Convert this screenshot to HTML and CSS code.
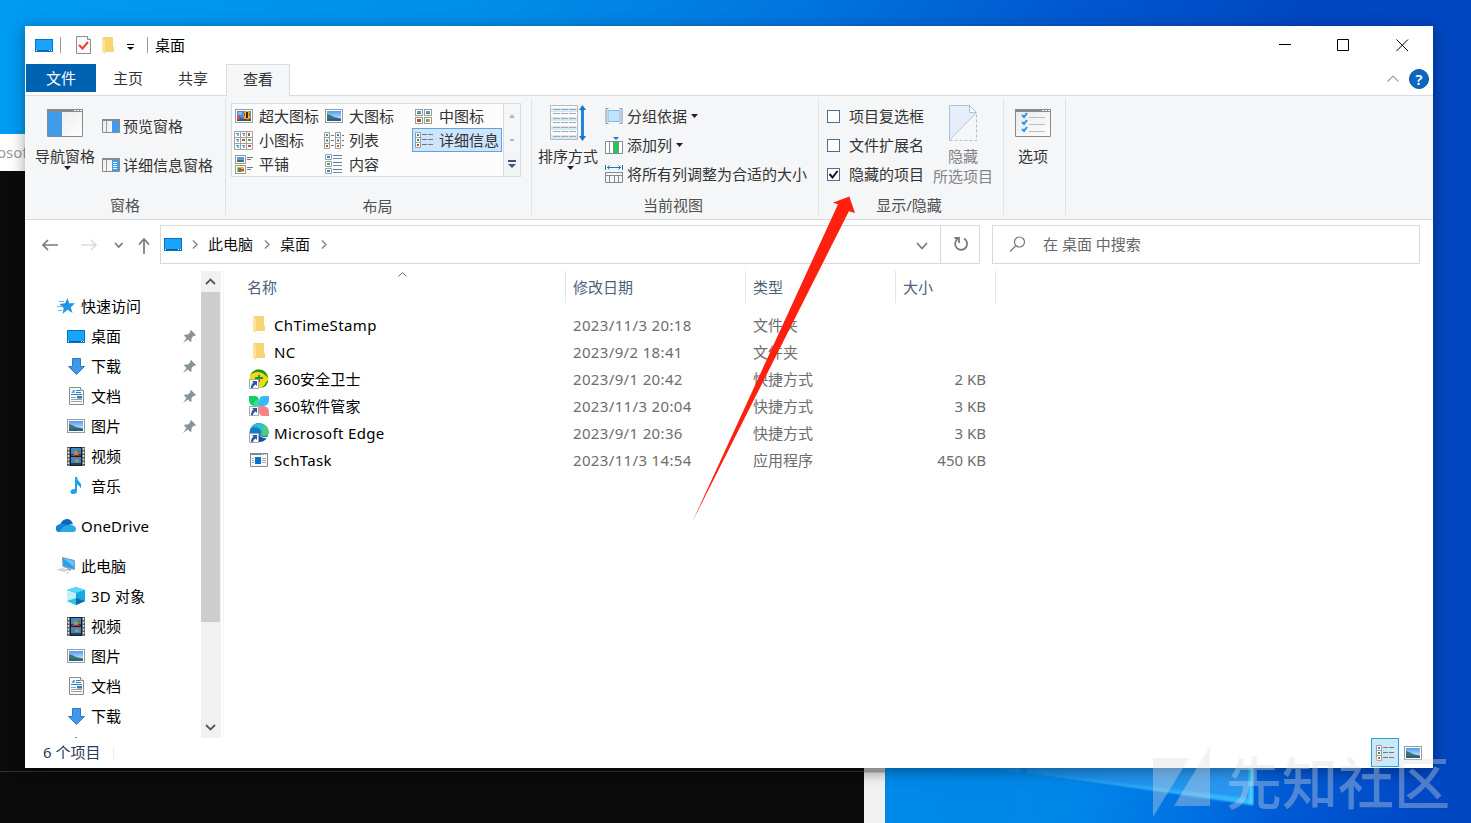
FILE: index.html
```html
<!DOCTYPE html>
<html lang="zh-CN">
<head>
<meta charset="utf-8">
<title>桌面</title>
<link rel="stylesheet" href="styles.css">
</head>
<body>
<svg class="sprite" width="0" height="0" aria-hidden="true">
  <defs>
    <linearGradient id="sky" x1="0" y1="0" x2="0" y2="1"><stop offset="0" stop-color="#4f9bf0"/><stop offset="1" stop-color="#e6f3fc"/></linearGradient>
    <linearGradient id="paneFill" x1="0" y1="0" x2="1" y2="1"><stop offset="0" stop-color="#e9eaeb"/><stop offset="1" stop-color="#fdfdfd"/></linearGradient>
  </defs>
  <symbol id="desktop" viewBox="0 0 18 13"><rect x=".5" y=".5" width="17" height="12" fill="#18a4fb" stroke="#0a70c0"/><path d="M1 11.5h16" stroke="#0a5fae"/><path d="M1 11.5h1M14 11.5h1M16 11.5h1" stroke="#fff"/></symbol>
  <symbol id="folder" viewBox="0 0 13 17"><path d="M1 0h10v10h1v5H1z" fill="#f6d673"/><path d="M0 0l3 3v14l-3-2z" fill="#fde3a0"/></symbol>
  <symbol id="check-doc" viewBox="0 0 15 18"><path d="M.5.5h11l3 3v14H.5z" fill="#fafafa" stroke="#8a8f92"/><path d="M11.5.5v3h3" fill="#fff" stroke="#8a8f92"/><path d="M3 9l3.500 3.500L12 6" fill="none" stroke="#ee3b2b" stroke-width="2"/></symbol>
  <symbol id="caret" viewBox="0 0 7 4"><path d="M0 0h7L3.500 4z"/></symbol>
  <symbol id="pic" viewBox="0 0 18 14"><rect x=".5" y=".5" width="17" height="13" fill="#fff" stroke="#979b9e"/><path d="M2 2h14v10H2z" fill="url(#sky)"/><path d="M2 5q4 1 7 3l7 1.500v1H2z" fill="#3e7867"/><path d="M2 10l6-.5 8 .5v2H2z" fill="#2c5f92"/></symbol>
  <symbol id="pic-xl" viewBox="0 0 18 14"><rect x=".5" y=".5" width="17" height="13" fill="#fff" stroke="#979b9e"/><path d="M2 2h14v10H2z" fill="#3b8be9"/><path d="M2 10h14v2H2z" fill="#385b38"/><path d="M3 3h4v3H3z" fill="#79b9f6"/><path d="M3 6h2v2h3v3H3z" fill="#e14c32"/><path d="M5 9l3 1v2H4z" fill="#2459b6"/><ellipse cx="12" cy="6" rx="3.500" ry="4" fill="#f2b51d"/><path d="M12 3v6" stroke="#44250f" stroke-width="2"/><path d="M9.500 4v3M14.500 4v3" stroke="#d13f25"/><path d="M11 10h3v1h-3z" fill="#c24427"/></symbol>
  <symbol id="thumb" viewBox="0 0 8 7"><rect x=".5" y=".5" width="7" height="6" fill="#fff" stroke="#979b9e"/><path d="M2 2h4v1.500H2z" fill="#4c9af1"/><path d="M2 3.500h4V5H2z" fill="#3d7a4b"/></symbol>
  <symbol id="thumb-r" viewBox="0 0 8 7"><rect x=".5" y=".5" width="7" height="6" fill="#fff" stroke="#979b9e"/><path d="M2 2h2v3H2z" fill="#ce4526"/><path d="M4 2h2v3H4z" fill="#a35d1a"/></symbol>
  <symbol id="thumb-g" viewBox="0 0 8 7"><rect x=".5" y=".5" width="7" height="6" fill="#fff" stroke="#979b9e"/><path d="M2 2h2v3H2z" fill="#57a456"/><path d="M4 2h2v3H4z" fill="#eca332"/></symbol>
  <symbol id="medium" viewBox="0 0 18 15"><use href="#thumb" width="8" height="7"/><use href="#thumb" x="9" width="8" height="7"/><use href="#thumb-r" y="8" width="8" height="7"/><use href="#thumb-g" x="9" y="8" width="8" height="7"/></symbol>
  <symbol id="small" viewBox="0 0 19 19"><path d="M.5.5h18v18H.5z" fill="#fff" stroke="#a0a3a5"/><path d="M6.500 0v19M12.500 0v19M0 6.500h19M0 12.500h19" stroke="#a0a3a5"/><path d="M2 2.500h3M8 2.500h3M2 8.500h3M2 14.500h3M8 14.500h3" stroke="#4396ef"/><path d="M3 4h2M9 4h2M9 16h2M3 10h2M3 16h2" stroke="#2c7554"/><path d="M14 2h2v3h-2zM8 8h3v2H8zM14 14h3v2h-3z" fill="#c94d28"/><path d="M14 8h3v2h-3z" fill="#5ca04d"/></symbol>
  <symbol id="list" viewBox="0 0 20 17"><path d="M.5.5h5v16h-5zM11.500.5h5v16h-5zM0 5.500h6M0 11.500h6M11 5.500h6M11 11.500h6" fill="#fff" stroke="#9b9fa2"/><path d="M2 3h2M13 3h2" stroke="#348bd8" stroke-width="2"/><path d="M2 8.500h2M13 8.500h2" stroke="#3d8a48" stroke-width="2"/><path d="M2 14h2M13 14h2" stroke="#ca4b27" stroke-width="2"/><path d="M7 3.500h3M7 8.500h3M7 13.500h3M18 3.500h2M18 8.500h2M18 13.500h2" stroke="#777"/></symbol>
  <symbol id="details" viewBox="0 0 19 16"><path d="M.5.5h5v15h-5zM0 5.500h6M0 10.500h6" fill="#fff" stroke="#9b9fa2"/><path d="M2 3h2" stroke="#348bd8" stroke-width="2"/><path d="M2 8h2" stroke="#3d8a48" stroke-width="2"/><path d="M2 13h2" stroke="#ca4b27" stroke-width="2"/><path d="M7 2.500h5M13 2.500h5M7 7.500h5M13 7.500h5M7 12.500h5M13 12.500h5" stroke="#777"/></symbol>
  <symbol id="tiles" viewBox="0 0 19 19"><rect x=".5" y=".5" width="10" height="8" fill="#fff" stroke="#979b9e"/><path d="M2 2h7v2.500H2z" fill="#4c9af1"/><path d="M2 4.500h7V7H2z" fill="#3e7867"/><rect x=".5" y="10.500" width="10" height="8" fill="#fff" stroke="#979b9e"/><path d="M2 12h7v5H2z" fill="#f1ae41"/><path d="M3 13h3v4H3z" fill="#48934b"/><path d="M6 14h3v2H6z" fill="#ce4a2b"/><path d="M12 2.500h6M12 4.500h4M12 12.500h6M12 14.500h4" stroke="#777"/></symbol>
  <symbol id="content" viewBox="0 0 18 20"><path d="M.5.5h6v5h-6zM.5 7.500h6v5h-6zM.5 14.500h6v5h-6z" fill="#fff" stroke="#9b9fa2"/><path d="M2 3h3M2 17h3" stroke="#348bd8" stroke-width="2"/><path d="M2 10h3" stroke="#6a9e36" stroke-width="2"/><path d="M8 1.500h9M8 8.500h9M8 15.500h9" stroke="#777"/><path d="M8 4.500h9M8 11.500h9M8 18.500h9" stroke="#5796dc"/></symbol>
  <symbol id="nav-pane" viewBox="0 0 36 28"><path d="M.5.5h35v27H.5z" fill="url(#paneFill)" stroke="#878b8e"/><path d="M0 0h36v3H0z" fill="#878b8e"/><path d="M27 1.500h2M30 1.500h2M33 1.500h2" stroke="#fff"/><path d="M1 3h14v24H1z" fill="#409ce8"/></symbol>
  <symbol id="preview-pane" viewBox="0 0 18 14"><path d="M.5.5h17v13H.5z" fill="url(#paneFill)" stroke="#878b8e"/><path d="M0 0h18v2H0z" fill="#878b8e"/><path d="M4.500 2v11" stroke="#999"/><path d="M10 2h7v11h-7z" fill="#409ce8"/></symbol>
  <symbol id="detail-pane" viewBox="0 0 18 14"><use href="#preview-pane" width="18" height="14"/><path d="M11 4.500h4M11 6.500h4M11 8.500h4M11 10.500h4" stroke="#fff"/></symbol>
  <symbol id="sort" viewBox="0 0 36 36"><path d="M.5.5h27v34H.5z" fill="#fbfcfd" stroke="#b7bbbe"/><path d="M1 3h26v4H1zM1 12h26v4H1zM1 21h26v4H1zM1 30h26v4H1z" fill="#d3eaf6"/><path d="M3 4.500h24M3 8.500h24M3 13.500h24M3 17.500h24M3 22.500h24M3 26.500h24M3 31.500h24" stroke="#a5a9ac" stroke-dasharray="7 1"/><path d="M32.500 2v32" stroke="#2287dc" stroke-width="3"/><path d="M29 5l3.500-5L36 5zM29 31l3.500 5 3.500-5z" fill="#1976c8"/></symbol>
  <symbol id="group" viewBox="0 0 17 16"><path d="M3 .5H.5v15H3M14 .5h2.500v15H14" fill="none" stroke="#8b8f92"/><rect x="2.500" y="2.500" width="12" height="11" fill="#c3e3fb" stroke="#7bb9ed"/></symbol>
  <symbol id="addcol" viewBox="0 0 18 17"><path d="M.5 4.500h17v12H.5zM4.500 4v13M13.500 4v13" fill="#fff" stroke="#858a8d"/><path d="M9 5h4v11H9z" fill="#19cf50"/><path d="M8.500 4v13" stroke="#858a8d"/><path d="M8 0h6l-3 3z" fill="#1976c8"/></symbol>
  <symbol id="fitcol" viewBox="0 0 18 18"><path d="M.5 0v5M17.500 0v5M2 2.500h14M4.500.5l-2 2 2 2M13.500.5l2 2-2 2" fill="none" stroke="#1976b8"/><path d="M0 7.500h18M0 10.500h18M.5 7v10.500h17V7M4.500 11v6M9.500 11v6M13.500 11v6" fill="none" stroke="#85898c"/></symbol>
  <symbol id="hide" viewBox="0 0 28 36"><path d="M0 0h21l6 7L0 35z" fill="#e6eff9"/><path d="M20.500.5v7h7" fill="#fff" stroke="#a9c2d7"/><path d="M.5 35V.5h20l7 7L.5 35" fill="none" stroke="#a9c2d7"/><path d="M.5 35.500h27V8" fill="none" stroke="#a9c2d7" stroke-dasharray="3 2"/></symbol>
  <symbol id="options" viewBox="0 0 36 28"><path d="M.5.5h35v27H.5z" fill="url(#paneFill)" stroke="#878b8e"/><path d="M0 0h36v3H0z" fill="#878b8e"/><path d="M27 1.500h2M30 1.500h2M33 1.500h2" stroke="#fff"/><path d="M7 6l2 2 3-4M7 13l2 2 3-4M7 20l2 2 3-4" fill="none" stroke="#2f92df" stroke-width="2"/><path d="M14 8.500h16M14 15.500h16M14 22.500h16" stroke="#bbbfc1"/></symbol>
  <symbol id="star" viewBox="0 0 18 16"><path d="M10.500 0l1.700 5.300H18l-4.200 3.900L15.500 15l-5-3.200L5.500 16l1.200-6L2.500 6l5.500-.7z" fill="#1f98e4"/><path d="M2 3.500h5M0 8.500h5M1 12.500h4" stroke="#65b8ed"/></symbol>
  <symbol id="down" viewBox="0 0 17 17"><path d="M4.500.5h8v8h4l-8 8-8-8h4z" fill="#4298e8" stroke="#2d7ac2"/></symbol>
  <symbol id="doc" viewBox="0 0 15 18"><path d="M.5.5h11l3 3v14H.5z" fill="#fafafa" stroke="#888d90"/><path d="M11.500.5v3h3" fill="#fff" stroke="#888d90"/><path d="M3 6l2-3v3M7 3.500h4M7 5.500h5M2 7.500h11" stroke="#1e84d8" fill="none"/><path d="M2 10.500h5M2 12.500h11M2 14.500h11" stroke="#9b9fa2"/><path d="M8 9h5v2.500H8z" fill="#3876b2"/></symbol>
  <symbol id="video" viewBox="0 0 18 19"><path d="M0 0h18v19H0z" fill="#565a5d"/><path d="M1.500 1v18M16.500 1v18" stroke="#e8e8e8" stroke-width="1.500" stroke-dasharray="2 1.500"/><path d="M4 1h10v8H4zM4 10h10v8H4z" fill="#3c86d2"/><path d="M4 7h10v2H4zM4 16h10v2H4z" fill="#21406a"/><path d="M7 6l2-3 2 3v2H7zM8 13l3-1 1 3H8z" fill="#c98f2a"/><path d="M5 8h3v1H5zM10 7h2v4h-2z" fill="#e5352b"/><path d="M11 3h2v3h-2zM6 14h2v1H6z" fill="#448c38"/><path d="M3.500 0v19M14.500 0v19M3 9.500h12M3 .5h12M3 18.500h12" stroke="#1b1e20"/></symbol>
  <symbol id="music" viewBox="0 0 12 18"><path d="M5 0h2q0 3 3 5.500 2 2.500.5 6-.5-3-3.500-4V14q0 3-3.500 3Q.5 17 .5 15q0-3 4.500-3z" fill="#1ea0f1"/></symbol>
  <symbol id="cloud" viewBox="0 0 20 14"><path d="M4 6q2-6 7-6 4 0 6 5-4 0-8 4l-6 4Q0 13 0 9q0-3 4-3z" fill="#0868bc"/><path d="M4 5q5-1 8 3l-8 5q-4 0-4-4 0-3 4-4z" fill="#1383d9"/><path d="M3 13q5-7 9-7 2-1 4 0 4 1 4 4 0 3-3 3z" fill="#29a8ea"/></symbol>
  <symbol id="pc" viewBox="0 0 20 18"><path d="M6.500 .5l12 3v9L7 9.500z" fill="#29a0ef" stroke="#8a9ca8"/><path d="M7 1l11 3v6z" fill="#65c3fa"/><path d="M11 11l4 1v2l-4-1z" fill="#9aa3a8"/><path d="M0 13l6-2 8 2-6 2zM9 16l3-1 2 .700-3 1z" fill="#d0d4d6"/></symbol>
  <symbol id="cube" viewBox="0 0 18 18"><path d="M9 0l9 3v11l-9 4-9-4V3z" fill="#29bbea"/><path d="M0 3l9 3v12l-9-4z" fill="#c3f0fb"/><path d="M0 3l9-3 9 3-9 3z" fill="#58d8f5"/><path d="M9 6l9-3v11l-9 4z" fill="#18a9e2"/><path d="M0 14l9-3v7z" fill="#29c6e2"/><path d="M9 11l9 3-9 4z" fill="#0a6da8"/></symbol>
  <symbol id="pin" viewBox="0 0 13 13"><path d="M8 0l5 5-1 1-1-.5L8.500 8v3l-1 1L5 9.500 0 13l3.500-5L1 5.500l1-1h3L7.500 2 7 1z" fill="#87939a"/></symbol>
  <symbol id="shortcut" viewBox="0 0 10 10"><path d="M.5.5h9v9h-9z" fill="#fff" stroke="#a3a8ac"/><path d="M3 2h5v5L6.500 5.500Q4 6.500 4 9H2q0-4 2.500-5.500z" fill="#2956a5"/></symbol>
  <symbol id="safe" viewBox="0 0 20 20"><circle cx="10" cy="9.500" r="9.500" fill="#f5dc08"/><path d="M1 6q4-7 12-5 5 2 6 8-5-6-10-6-4 0-8 3zM11 19q5-2 6-6l2-2q0 7-8 8z" fill="#1b9149"/><path d="M9 6h2v2h3v2h-3v3H9v-3H6V8h3z" fill="#278848"/><use href="#shortcut" y="10" width="10" height="10"/></symbol>
  <symbol id="manager" viewBox="0 0 20 20"><path d="M0 0h6q4 0 4 6v4H5Q0 9 0 4z" fill="#12cf62"/><path d="M5 10q-2-5 5-7v7z" fill="#3ddc9a"/><path d="M20 0h-6q-4 0-4 6v4h5q5-1 5-6z" fill="#38b9f8"/><path d="M10 10h5q5 1 5 6v4h-6q-4 0-4-5z" fill="#fb8385"/><use href="#shortcut" y="10" width="10" height="10"/></symbol>
  <symbol id="edge" viewBox="0 0 20 20"><circle cx="10" cy="9.500" r="9.500" fill="#147bc5"/><path d="M1 6Q5-1 12 .500q8 2 8 9-1 5-7 3-2-1-.500-3Q11 4 6 4 3 4 1 6z" fill="#31bed0"/><path d="M14 2q6 3 5.500 8-2 4-7 2 3-5 1.500-10z" fill="#5acc64"/><path d="M10 8q-2 7 8 6-2 5-8 5z" fill="#12569e"/><path d="M10 9q0 4 4 5h5v1q-9 1-9-6z" fill="#fff"/><use href="#shortcut" y="10" width="10" height="10"/></symbol>
  <symbol id="app" viewBox="0 0 18 14"><path d="M.5.5h17v13H.5z" fill="#f9fafa" stroke="#85898c"/><path d="M0 1h18" stroke="#85898c" stroke-width="2"/><path d="M12 1.500h1M14 1.500h1M16 1.500h1" stroke="#fff"/><path d="M5 4h6v7H5z" fill="#0574d1"/><path d="M2 5.500h2M2 7.500h2M2 9.500h2M12 5.500h4M12 7.500h4M12 9.500h4" stroke="#a1a4a6"/></symbol>
</svg>

<div class="wallpaper">
  <svg class="beams" width="586" height="55" viewBox="0 0 586 55">
    <defs>
      <linearGradient id="pane" x1="0" y1="0" x2="1" y2="0"><stop offset="0" stop-color="#158ee8"/><stop offset="1" stop-color="#2b98f3"/></linearGradient>
      <linearGradient id="glow" x1="0" y1="0" x2="1" y2="0"><stop offset="0" stop-color="#2aa2f4" stop-opacity=".5"/><stop offset="1" stop-color="#35bffc"/></linearGradient>
      <filter id="soft"><feGaussianBlur stdDeviation="1"/></filter>
    </defs>
    <path d="M108 0h27v5zM142 0H367V36L142 5z" fill="url(#pane)"/>
    <path d="M142 4L367 37V31z" fill="url(#glow)" filter="url(#soft)"/>
    <path d="M364-4h4.500v41l-4.500-1z" fill="#4ad0ff" filter="url(#soft)"/>
  </svg>
</div>
<div class="behind-title">osoft</div>
<div class="console"></div>
<div class="console-scroll"></div>

<main class="window">
  <header class="titlebar">
    <svg class="t-desktop" width="18" height="13"><use href="#desktop"/></svg>
    <span class="t-sep"></span>
    <svg class="t-check" width="15" height="18"><use href="#check-doc"/></svg>
    <svg class="t-folder" width="13" height="17"><use href="#folder"/></svg>
    <svg class="t-more" width="7" height="6" viewBox="0 0 7 6"><path d="M0 0h7v1H0zM0 3h7L3.500 6z"/></svg>
    <span class="t-sep t-sep-b"></span>
    <span class="t-name">桌面</span>
    <svg class="controls" width="130" height="13" viewBox="0 0 130 13" fill="none" stroke="#000"><path d="M0 5.500h12M58.500.5h11v11h-11z"/><path d="M117.500.5l11.500 11.500M129 .5L117.500 12"/></svg>
  </header>

  <nav class="tabs">
    <span class="tab tab-file">文件</span>
    <span class="tab tab-home">主页</span>
    <span class="tab tab-share">共享</span>
    <span class="tab tab-view">查看</span>
    <svg class="collapse" width="12" height="7" viewBox="0 0 12 7"><path d="M.5 6.500L6 1l5.500 5.500" fill="none" stroke="#a0a0a0" stroke-width="1.200"/></svg>
    <span class="help">?</span>
  </nav>

  <section class="ribbon">
    <div class="group g-panes">
      <div class="body">
        <div class="big"><svg class="big-a" width="36" height="28"><use href="#nav-pane"/></svg><span>导航窗格</span><svg class="caret" width="7" height="4"><use href="#caret"/></svg></div>
        <div class="pane-list">
          <div class="cmd"><svg width="18" height="14"><use href="#preview-pane"/></svg>预览窗格</div>
          <div class="cmd"><svg width="18" height="14"><use href="#detail-pane"/></svg>详细信息窗格</div>
        </div>
      </div>
      <div class="caption">窗格</div>
    </div>
    <div class="group g-layout">
      <div class="body gallery">
        <div class="gallery-grid">
          <div class="opt"><svg width="18" height="14"><use href="#pic-xl"/></svg>超大图标</div>
          <div class="opt"><svg width="18" height="14"><use href="#pic"/></svg>大图标</div>
          <div class="opt"><svg width="18" height="15"><use href="#medium"/></svg>中图标</div>
          <div class="opt"><svg class="out-1" width="19" height="19"><use href="#small"/></svg>小图标</div>
          <div class="opt"><svg class="out-2" width="20" height="17"><use href="#list"/></svg>列表</div>
          <div class="opt opt-on"><svg class="out-0" width="19" height="16"><use href="#details"/></svg>详细信息</div>
          <div class="opt"><svg class="out-0" width="19" height="19"><use href="#tiles"/></svg>平铺</div>
          <div class="opt"><svg width="18" height="20"><use href="#content"/></svg>内容</div>
        </div>
        <div class="gallery-scroll">
          <span><svg width="6" height="4" viewBox="0 0 6 4"><path d="M0 4h6L3 0z" fill="#a9b8cb"/></svg></span>
          <span><svg width="6" height="3" viewBox="0 0 6 3"><path d="M0 0h6L3 3z" fill="#a9b8cb"/></svg></span>
          <span class="last"><svg width="8" height="8" viewBox="0 0 8 8"><path d="M0 0h8v2H0zM0 4h8L4 8z" fill="#3f5677"/></svg></span>
        </div>
      </div>
      <div class="caption">布局</div>
    </div>
    <div class="group g-view">
      <div class="body">
        <div class="big"><svg class="big-b" width="36" height="36"><use href="#sort"/></svg><span>排序方式</span><svg class="caret" width="7" height="4"><use href="#caret"/></svg></div>
        <div class="stack">
          <div class="cmd"><svg width="18" height="16"><use href="#group"/></svg>分组依据<svg class="caret-in" width="7" height="4"><use href="#caret"/></svg></div>
          <div class="cmd"><svg width="18" height="17"><use href="#addcol"/></svg>添加列<svg class="caret-in" width="7" height="4"><use href="#caret"/></svg></div>
          <div class="cmd"><svg width="18" height="18"><use href="#fitcol"/></svg>将所有列调整为合适的大小</div>
        </div>
      </div>
      <div class="caption">当前视图</div>
    </div>
    <div class="group g-show">
      <div class="body">
        <div class="stack checks">
          <div class="cmd"><i class="box"></i>项目复选框</div>
          <div class="cmd"><i class="box"></i>文件扩展名</div>
          <div class="cmd"><i class="box"><svg width="11" height="11" viewBox="0 0 11 11"><path d="M1.500 5l3 3.500L9.500 2" fill="none" stroke="#1a0f1a" stroke-width="2"/></svg></i>隐藏的项目</div>
        </div>
        <div class="big big-hide"><svg class="big-b" width="28" height="36"><use href="#hide"/></svg><span>隐藏</span><span>所选项目</span></div>
      </div>
      <div class="caption">显示/隐藏</div>
    </div>
    <div class="group g-options">
      <div class="body"><div class="big"><svg class="big-a" width="36" height="28"><use href="#options"/></svg><span>选项</span></div></div>
    </div>
  </section>

  <section class="address-row">
    <svg class="arrows" width="110" height="18" viewBox="0 0 110 18" fill="none" stroke="#777b7d" stroke-width="1.700"><path d="M1 9h15M6 4L1 9l5 5"/><path d="M39 9h15M49 4l5 5-5 5" stroke="#dadbdb"/><path d="M73 7l3.700 4L80.500 7"/><path d="M102 18V3M97 8.500l5-5.500 5 5.500"/></svg>
    <div class="path">
      <svg width="18" height="13"><use href="#desktop"/></svg>
      <svg class="c1" width="6" height="9" viewBox="0 0 6 9"><path d="M1 .5l4 4-4 4" fill="none" stroke="#85898c" stroke-width="1.500"/></svg>
      <span>此电脑</span>
      <svg class="c2" width="6" height="9" viewBox="0 0 6 9"><path d="M1 .5l4 4-4 4" fill="none" stroke="#85898c" stroke-width="1.500"/></svg>
      <span>桌面</span>
      <svg class="c2" width="6" height="9" viewBox="0 0 6 9"><path d="M1 .5l4 4-4 4" fill="none" stroke="#85898c" stroke-width="1.500"/></svg>
      <svg class="drop" width="12" height="8" viewBox="0 0 12 8"><path d="M1 1l5 5.500L11 1" fill="none" stroke="#747879" stroke-width="1.700"/></svg>
      <span class="refresh"><svg width="16" height="16" viewBox="0 0 16 16"><path d="M4.500 3A6 6 0 1 0 11 2.500M1.500 2H6V7" fill="none" stroke="#777b7d" stroke-width="1.800"/></svg></span>
    </div>
    <div class="search"><svg width="17" height="17" viewBox="0 0 17 17"><circle cx="10.500" cy="6" r="5" fill="none" stroke="#777b7d" stroke-width="1.200"/><path d="M7 9.500L1 15.500" stroke="#777b7d" stroke-width="1.200"/></svg><span>在 桌面 中搜索</span></div>
  </section>

  <section class="content">
    <aside class="side">
      <div class="item root"><i><svg width="18" height="16"><use href="#star"/></svg></i>快速访问</div>
      <div class="item"><i><svg width="18" height="13"><use href="#desktop"/></svg></i>桌面<svg class="pin" width="13" height="13"><use href="#pin"/></svg></div>
      <div class="item"><i><svg width="17" height="17"><use href="#down"/></svg></i>下载<svg class="pin" width="13" height="13"><use href="#pin"/></svg></div>
      <div class="item"><i><svg width="15" height="18"><use href="#doc"/></svg></i>文档<svg class="pin" width="13" height="13"><use href="#pin"/></svg></div>
      <div class="item"><i><svg width="18" height="14"><use href="#pic"/></svg></i>图片<svg class="pin" width="13" height="13"><use href="#pin"/></svg></div>
      <div class="item"><i><svg width="18" height="19"><use href="#video"/></svg></i>视频</div>
      <div class="item"><i><svg width="12" height="18"><use href="#music"/></svg></i>音乐</div>
      <div class="item root spaced"><i><svg width="20" height="14"><use href="#cloud"/></svg></i><span class="wide">OneDrive</span></div>
      <div class="item root"><i><svg width="20" height="18"><use href="#pc"/></svg></i>此电脑</div>
      <div class="item"><i><svg width="18" height="18"><use href="#cube"/></svg></i><span class="wide">3D 对象</span></div>
      <div class="item"><i><svg width="18" height="19"><use href="#video"/></svg></i>视频</div>
      <div class="item"><i><svg width="18" height="14"><use href="#pic"/></svg></i>图片</div>
      <div class="item"><i><svg width="15" height="18"><use href="#doc"/></svg></i>文档</div>
      <div class="item"><i><svg width="17" height="17"><use href="#down"/></svg></i>下载</div>
      <div class="item"><i><svg width="12" height="18"><use href="#music"/></svg></i></div>
    </aside>
    <div class="scroll">
      <svg width="11" height="7" viewBox="0 0 11 7"><path d="M1 6l4.500-4.500L10 6" fill="none" stroke="#6a4f5a" stroke-width="1.800"/></svg>
      <div class="thumb"></div>
      <svg width="11" height="7" viewBox="0 0 11 7"><path d="M1 1l4.500 4.500L10 1" fill="none" stroke="#6a4f5a" stroke-width="1.800"/></svg>
    </div>
    <div class="files">
      <div class="row head"><span class="name">名称<svg class="sorted" width="9" height="5" viewBox="0 0 9 5"><path d="M.5 4.500l4-4 4 4" fill="none" stroke="#666"/></svg></span><span class="date">修改日期</span><span class="type">类型</span><span class="size">大小</span></div>
      <div class="row"><span class="name"><i><svg width="13" height="17"><use href="#folder"/></svg></i>ChTimeStamp</span><span class="date">2023/11/3 20:18</span><span class="type">文件夹</span><span class="size"></span></div>
      <div class="row"><span class="name"><i><svg width="13" height="17"><use href="#folder"/></svg></i>NC</span><span class="date">2023/9/2 18:41</span><span class="type">文件夹</span><span class="size"></span></div>
      <div class="row"><span class="name zh"><i><svg width="20" height="20"><use href="#safe"/></svg></i>360安全卫士</span><span class="date">2023/9/1 20:42</span><span class="type">快捷方式</span><span class="size">2 KB</span></div>
      <div class="row"><span class="name zh"><i><svg width="20" height="20"><use href="#manager"/></svg></i>360软件管家</span><span class="date">2023/11/3 20:04</span><span class="type">快捷方式</span><span class="size">3 KB</span></div>
      <div class="row"><span class="name"><i><svg width="20" height="20"><use href="#edge"/></svg></i>Microsoft Edge</span><span class="date">2023/9/1 20:36</span><span class="type">快捷方式</span><span class="size">3 KB</span></div>
      <div class="row"><span class="name"><i><svg width="18" height="14"><use href="#app"/></svg></i>SchTask</span><span class="date">2023/11/3 14:54</span><span class="type">应用程序</span><span class="size">450 KB</span></div>
    </div>
  </section>

  <footer class="status">
    <span>6 个项目</span>
    <span class="status-sep"></span>
    <div class="modes"><span class="mode-on"><svg width="19" height="16"><use href="#details"/></svg></span><svg width="18" height="14"><use href="#pic"/></svg></div>
  </footer>
</main>

<svg class="pointer" width="170" height="330" viewBox="690 195 170 330"><path d="M692.500 521.500L838 204.300 832.800 202.700 849.300 196.500 855 213 848.900 211.300z" fill="#ff2010"/></svg>
<div class="watermark">
  <svg width="58" height="72" viewBox="0 0 58 72"><path d="M0 12h36L0 71zM57 0v60H21z" fill="#dcdce0"/></svg>
  <span>先知社区</span>
</div>
</body>
</html>
```
FILE: styles.css
```css
* { box-sizing: border-box; }
body {
  margin: 0;
  width: 1471px;
  height: 823px;
  position: relative;
  overflow: hidden;
  font: 15px/20px "Noto Sans", "Noto Sans CJK SC", sans-serif;
  color: #333;
}
svg { display: block; flex: none; }
i { font-style: normal; }
.sprite { position: absolute; }

/* desktop layers */
.wallpaper {
  position: absolute;
  inset: 0;
  background: linear-gradient(90deg, #009bf2 0, #008de9 500px, #0075df 800px, #0057d0 1080px, #0047c3 1300px, #0046c0 100%);
}
.beams {
  position: absolute;
  left: 885px;
  top: 768px;
  background: linear-gradient(97deg, #0089e8 0, #0087ea 32%, #0072e3 52%, #005ad4 68%, #0049c6 90%, #0046c0);
}
.behind-title {
  position: absolute;
  left: 0;
  top: 134px;
  width: 60px;
  height: 37px;
  padding-top: 8px;
  background: #fff;
  color: #999;
  text-indent: -3px;
}
.console {
  position: absolute;
  left: 0;
  top: 171px;
  width: 864px;
  height: 652px;
  background: linear-gradient(#0b0b0b 600px, #333 600px, #333 601px, #0b0b0b 601px);
}
.console-scroll {
  position: absolute;
  left: 864px;
  top: 768px;
  width: 21px;
  height: 55px;
  background: linear-gradient(#b9b9b9 3px, #8f8f8f 3px, #e4e4e4 5px, #f1f1f1 14px);
}

.window {
  position: absolute;
  left: 25px;
  top: 26px;
  width: 1408px;
  height: 742px;
  display: flex;
  flex-direction: column;
  background: #fff;
  box-shadow: 0 3px 14px rgba(0, 0, 0, .38);
}

/* title bar */
.titlebar { height: 38px; display: flex; align-items: center; padding: 0 24px 0 10px; color: #000; }
.t-sep { width: 1px; height: 16px; background: #999; margin-left: 7px; }
.t-check { margin-left: 15px; }
.t-folder { margin-left: 11px; }
.t-more { margin: 4px 0 0 12px; }
.t-sep-b { margin-left: 13px; }
.t-name { margin-left: 7px; }
.controls { margin-left: auto; }

/* tabs */
.tabs { height: 32px; display: flex; padding-left: 1px; border-bottom: 1px solid #dadbdc; color: #333; }
.tab { text-align: center; line-height: 29px; }
.tab-file { width: 70px; height: 28px; background: #0063b1; color: #fff; }
.tab-home { width: 64px; }
.tab-share { width: 66px; }
.tab-view { width: 64px; height: 32px; background: #f5f6f7; border: 1px solid #dadbdc; border-bottom: 0; line-height: 28px; }
.collapse { margin: 11px 10px 0 auto; }
.help {
  width: 20px;
  height: 20px;
  margin: 5px 4px 0 0;
  border-radius: 50%;
  border: 1px solid #17528c;
  background: #0868c4;
  color: #fff;
  font-size: 15px;
  font-weight: 600;
  line-height: 18px;
  text-align: center;
}

/* ribbon */
.ribbon { height: 124px; display: flex; padding: 2px 0 4px; background: #f5f6f7; border-bottom: 1px solid #dadbdc; }
.group { display: flex; flex-direction: column; border-right: 1px solid #e2e3e4; }
.g-panes { width: 201px; }
.g-layout { width: 306px; }
.g-view { width: 287px; }
.g-show { width: 185px; }
.g-options { width: 62px; }
.body { height: 98px; display: flex; }
.caption { text-align: center; color: #505050; padding-top: 1px; padding-right: 4px; }
.g-panes .caption { padding-right: 0; }
.big { width: 60px; display: flex; flex-direction: column; align-items: center; white-space: nowrap; }
.g-panes .big { margin-left: 10px; }
.g-view .big { margin-left: 6px; }
.big span { line-height: 20px; }
.big-a { margin: 11px 0 9px; }
.g-panes .big-a { margin-right: 1px; }
.big-b { margin: 7px 0 5px; }
.caret { margin-left: 4px; fill: #2b1a22; }
.pane-list { padding: 18px 0 0 7px; display: flex; flex-direction: column; gap: 19px; }
.cmd { display: flex; align-items: center; gap: 4px; height: 20px; white-space: nowrap; }
.pane-list .cmd { gap: 3px; }
.caret-in { fill: #2b1a22; }
.stack { padding: 8px 0 0 7px; display: flex; flex-direction: column; gap: 9px; }
.checks { padding-left: 8px; }
.checks .cmd { gap: 9px; }
.box { width: 13px; height: 13px; border: 1px solid #456f9e; background: #fff; }
.big-hide { margin-left: 9px; color: #818487; }
.g-options .big { margin-left: -1px; }

.gallery { width: 290px; height: 75px; margin: 5px 10px 13px 5px; }
.g-layout .caption { padding: 6px 2px 0 0; }
.gallery-grid { width: 273px; display: grid; grid-template-columns: repeat(3, 90px); grid-auto-rows: 24px; background: #fcfcfc; border: 1px solid #dadbdc; border-right: 0; }
.opt { display: flex; align-items: center; padding-left: 3px; gap: 6px; white-space: nowrap; }
.opt .out-0 { margin-right: -1px; }
.opt .out-1 { margin-left: -1px; }
.opt .out-2 { margin: 0 -1px; }
.opt-on { background: #cce4fc; border: 1px solid #62a2e4; padding-left: 2px; }
.gallery-scroll { width: 18px; border: 1px solid #dadbdc; display: flex; flex-direction: column; }
.gallery-scroll span { height: 24px; display: flex; align-items: center; justify-content: center; }
.gallery-scroll .last { background: #f3f4f5; }

/* address row */
.address-row { height: 51px; display: flex; padding-top: 5px; }
.arrows { margin: 11px 8px 0 17px; }
.path { width: 820px; height: 39px; display: flex; align-items: center; border: 1px solid #d9d9d9; padding-left: 3px; color: #111; }
.path > span { padding-bottom: 2px; }
.c1 { margin: 0 10px; }
.c2 { margin: 0 10px 0 11px; }
.drop { margin: 2px 12px 0 auto; }
.refresh { width: 39px; height: 37px; border-left: 1px solid #d9d9d9; display: flex; align-items: center; justify-content: center; }
.refresh svg { margin-left: 2px; }
.search { width: 428px; height: 39px; margin-left: 12px; border: 1px solid #d9d9d9; display: flex; align-items: center; gap: 17px; padding-left: 16px; color: #666; }
.search span { padding-bottom: 2px; }

/* content */
.content { height: 467px; display: flex; }
.side { width: 176px; height: 467px; padding-top: 20px; overflow: hidden; color: #000; }
.item { height: 30px; display: flex; align-items: center; padding-left: 41px; padding-right: 5px; }
.item i { width: 20px; margin-right: 5px; display: flex; justify-content: center; }
.item.root { padding-left: 31px; }
.item.spaced { margin: 10px 0; }
.wide { letter-spacing: .2px; }
.pin { margin-left: auto; }
.scroll { width: 20px; background: #f0f1f1; display: flex; flex-direction: column; align-items: center; padding: 7px 0; }
.scroll svg { margin-right: 1px; }
.scroll .thumb { width: 20px; height: 330px; margin: 7px 0 auto; background: #cdcdcd; border-right: 1px solid #f0f1f1; }
.files { margin-left: 2px; border-left: 1px solid #f4f4f4; }
.row { height: 27px; display: flex; align-items: center; color: #6d6d6d; }
.row.head { height: 32px; margin-bottom: 8px; color: #4c607a; }
.row span { display: flex; align-items: center; white-space: nowrap; }
.row .name { width: 341px; padding-left: 25px; color: #000; letter-spacing: .36px; }
.row .name.zh { letter-spacing: .12px; }
.name i { width: 20px; display: flex; justify-content: center; margin-right: 5px; }
.date { width: 180px; padding-left: 8px; letter-spacing: .35px; }
.type { width: 150px; padding-left: 8px; }
.row .size { width: 101px; justify-content: flex-end; padding-right: 10px; }
.head span { height: 32px; border-right: 1px solid #e5e5e5; }
.row.head .name { width: 342px; padding-left: 23px; color: #4c607a; position: relative; letter-spacing: 0; }
.head .date { padding-left: 7px; letter-spacing: 0; }
.head .type { padding-left: 7px; }
.row.head .size { width: 100px; justify-content: flex-start; padding-left: 7px; }
.sorted { position: absolute; left: 174px; top: 1px; }

/* status */
.status { height: 30px; display: flex; align-items: flex-start; padding: 0 11px 0 18px; color: #263d5e; line-height: 28px; }
.status-sep { width: 1px; height: 14px; margin: 8px 0 0 13px; background: #eee; }
.modes { display: flex; align-items: center; gap: 5px; margin-left: auto; }
.mode-on { width: 28px; height: 29px; display: flex; align-items: center; justify-content: center; background: #cce8f6; border: 1px solid #26a0da; }

/* overlays */
.pointer { position: absolute; left: 690px; top: 195px; }
.watermark { position: absolute; left: 1153px; top: 746px; display: flex; gap: 15px; opacity: .36; color: #dcdce0; }
.watermark span { font: 500 56px/72px "Noto Sans CJK SC", sans-serif; white-space: nowrap; position: relative; top: -2px; }
```
